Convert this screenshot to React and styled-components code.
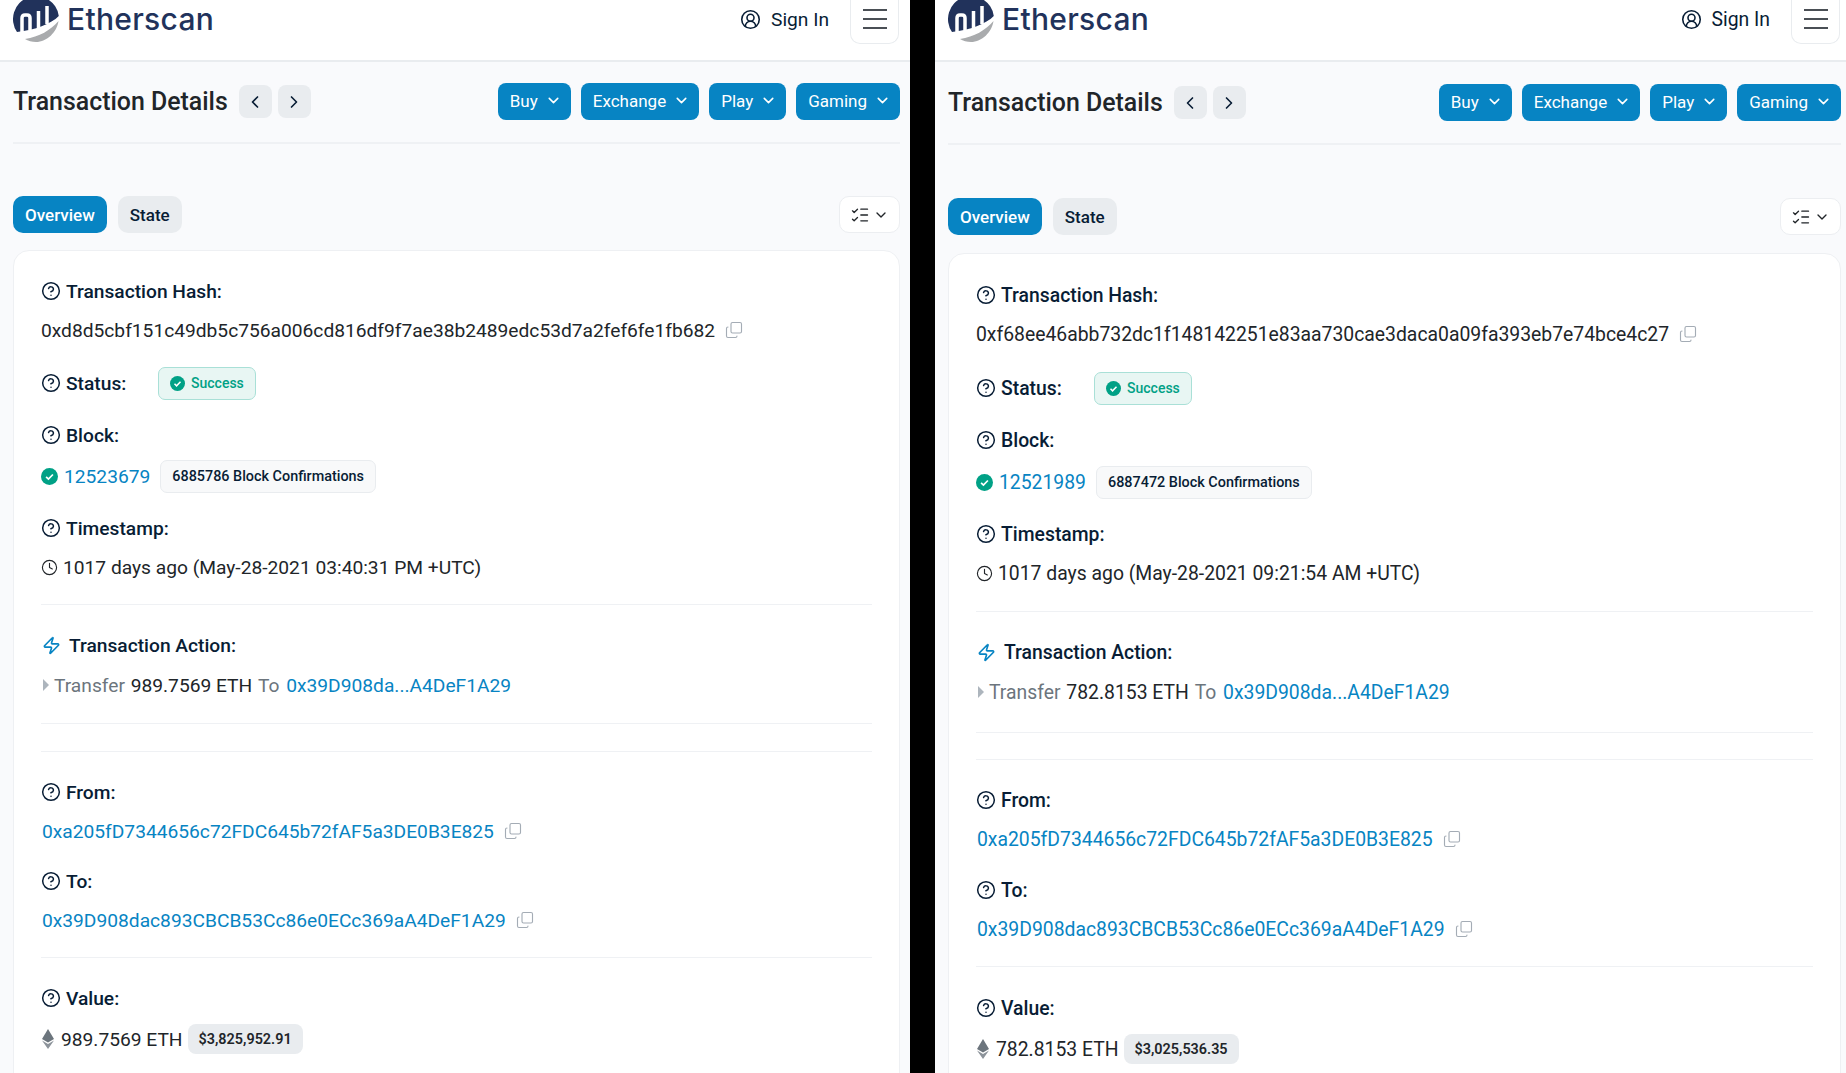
import styled, { createGlobalStyle } from "styled-components";
import {
  ChevronDown,
  ChevronLeft,
  ChevronRight,
  CircleHelp,
  CircleUserRound,
  Clock,
  Copy,
  ListChecks,
  Zap,
} from "lucide-react";

const LEFT = {
  hash: "0xd8d5cbf151c49db5c756a006cd816df9f7ae38b2489edc53d7a2fef6fe1fb682",
  block: "12523679",
  confirmations: "6885786 Block Confirmations",
  time: "1017 days ago (May-28-2021 03:40:31 PM +UTC)",
  amount: "989.7569 ETH",
  price: "$3,825,952.91",
  width: 910,
  font: 19.2,
  padLeft: 13,
  padRight: 10,
  toolbarTop: 21,
  ruleTop: 22,
  tabsTop: 52,
  cardTop: 17,
  cardPad: 28,
  statusWidth: 117,
  gaps: [15, 29, 28, 17, 28, 15, 25, 28, 16, 26, 27, 28, 15, 26, 15, 25, 28, 17],
};

const RIGHT = {
  hash: "0xf68ee46abb732dc1f148142251e83aa730cae3daca0a09fa393eb7e74bce4c27",
  block: "12521989",
  confirmations: "6887472 Block Confirmations",
  time: "1017 days ago (May-28-2021 09:21:54 AM +UTC)",
  amount: "782.8153 ETH",
  price: "$3,025,536.35",
  width: 911,
  font: 19.35,
  padLeft: 13,
  padRight: 5,
  toolbarTop: 22,
  ruleTop: 22,
  tabsTop: 53,
  cardTop: 18,
  cardPad: 29,
  statusWidth: 118,
  gaps: [15, 30, 28, 18, 28, 15, 26, 28, 16, 28, 26, 28, 15, 27, 15, 25, 29, 17],
};

const MENUS = ["Buy", "Exchange", "Play", "Gaming"];
const FROM = "0xa205fD7344656c72FDC645b72fAF5a3DE0B3E825";
const TO = "0x39D908dac893CBCB53Cc86e0ECc369aA4DeF1A29";

const GlobalStyle = createGlobalStyle`
  html, body {
    margin: 0;
    background: #000;
  }
  * {
    box-sizing: border-box;
  }
`;

const Page = styled.div`
  display: flex;
  width: 1846px;
  height: 1073px;
  justify-content: space-between;
  overflow: hidden;
  background: #000;
  font-family: Roboto, "Liberation Sans", sans-serif;
  color: #212529;
`;

const PanelBox = styled.div`
  width: ${(p) => p.$width}px;
  height: 1073px;
  overflow: hidden;
  background: #f9fafc;
  font-size: ${(p) => p.$font}px;
`;

const Header = styled.header`
  display: flex;
  align-items: flex-start;
  height: 62px;
  padding: 0 ${(p) => p.$right}px 0 ${(p) => p.$left}px;
  background: #fff;
  border-bottom: 2px solid #e9ecef;
`;

const LogoMark = styled.svg`
  flex: none;
  width: 46px;
  height: 46px;
  margin-top: -4px;
`;

const LogoText = styled.span`
  margin: 0 auto 0 8px;
  font-family: Inter, sans-serif;
  font-size: 30px;
  font-weight: 500;
  letter-spacing: 0.3px;
  line-height: 39px;
  color: #21325b;
`;

const SignIn = styled.span`
  display: flex;
  align-items: center;
  gap: 10px;
  height: 39px;
  margin-right: 21px;
  color: #081d35;
`;

const MenuBox = styled.div`
  display: flex;
  flex-direction: column;
  align-items: center;
  justify-content: flex-end;
  gap: 7px;
  width: 49px;
  height: 44px;
  padding-bottom: 14px;
  background: #fff;
  border: 1px solid #e9ecef;
  border-top: 0;
  border-radius: 0 0 10px 10px;
`;

const MenuLine = styled.i`
  display: block;
  width: 24px;
  height: 2px;
  background: #4a4f55;
`;

const Content = styled.div`
  padding: 0 ${(p) => p.$right}px 0 ${(p) => p.$left}px;
`;

const TitleRow = styled.div`
  display: flex;
  align-items: center;
  margin-top: ${(p) => p.$top}px;
  height: 37px;
`;

const Title = styled.h1`
  margin: 0 11px 0 0;
  font-size: 24.9px;
  font-weight: 500;
  color: #212529;
`;

const ArrowButton = styled.span`
  display: flex;
  align-items: center;
  justify-content: center;
  width: 33px;
  height: 33px;
  margin-right: 6px;
  border-radius: 8px;
  background: #e9ecef;
  color: #081d35;
`;

const DropMenus = styled.div`
  display: flex;
  gap: 10px;
  margin-left: auto;
`;

const DropButton = styled.span`
  display: flex;
  align-items: center;
  justify-content: space-between;
  gap: 7px;
  height: 37px;
  padding: 0 9px 2px 12px;
  border-radius: 8px;
  background: #0784c3;
  color: #fff;
  font-size: 17px;
`;

const Rule = styled.hr`
  margin: ${(p) => p.$top}px 0 0;
  height: 2px;
  border: 0;
  background: #eff1f4;
`;

const TabRow = styled.div`
  display: flex;
  align-items: center;
  gap: 11px;
  margin-top: ${(p) => p.$top}px;
  height: 37px;
`;

const Tab = styled.span`
  display: flex;
  align-items: center;
  height: 37px;
  padding: 0 12px;
  border-radius: 10px;
  font-size: 17px;
  font-weight: 500;
  background: ${(p) => (p.$active ? "#0784c3" : "#e9ecef")};
  color: ${(p) => (p.$active ? "#fff" : "#081d35")};
`;

const ViewButton = styled.span`
  display: flex;
  align-items: center;
  justify-content: center;
  gap: 3px;
  width: 61px;
  height: 37px;
  margin-left: auto;
  border: 1px solid #eceef1;
  border-radius: 10px;
  background: #fff;
  color: #212529;
`;

const Card = styled.section`
  margin-top: ${(p) => p.$top}px;
  padding: ${(p) => p.$pad}px 27px 0;
  min-height: 900px;
  background: #fff;
  border: 1px solid #eef0f3;
  border-radius: 16px;
`;

const Line = styled.div`
  display: flex;
  align-items: center;
  height: 24px;
  margin-top: ${(p) => p.$gap || 0}px;
  white-space: nowrap;
`;

const Divider = styled.hr`
  margin: ${(p) => p.$gap}px 0 0;
  height: 1px;
  border: 0;
  background: #eff1f4;
`;

const Label = styled.span`
  display: flex;
  align-items: center;
  gap: 5px;
  min-width: ${(p) => p.$width || 0}px;
  font-weight: 500;
  color: #081d35;
`;

const Link = styled.a`
  color: #0784c3;
  text-decoration: none;
`;

const Address = styled(Link)`
  margin-left: 1px;
`;

const CopyMark = styled(Copy)`
  flex: none;
  margin-left: 10px;
  color: #a4acb5;
  transform: scaleY(-1);
`;

const StatusBadge = styled.span`
  display: flex;
  align-items: center;
  gap: 6px;
  height: 33px;
  padding: 0 11px;
  border: 1px solid #a9e0d7;
  border-radius: 7px;
  background: #e8f6f3;
  color: #00a186;
  font-size: 14px;
  font-weight: 500;
`;

const Check = styled.svg`
  flex: none;
  width: ${(p) => p.$size}px;
  height: ${(p) => p.$size}px;
`;

const BlockLink = styled(Link)`
  margin-left: 6px;
`;

const ConfirmBadge = styled.span`
  display: flex;
  align-items: center;
  height: 33px;
  margin-left: 10px;
  padding: 0 11px;
  border: 1px solid #e9ecef;
  border-radius: 7px;
  background: #f8f9fa;
  color: #081d35;
  font-size: 14.4px;
  font-weight: 500;
`;

const TimeText = styled.span`
  margin-left: 5px;
`;

const ActionLabel = styled(Label)`
  gap: 8px;
  margin-left: 1px;
`;

const Caret = styled.i`
  width: 0;
  height: 0;
  margin: 0 5px 0 2px;
  border-left: 6px solid #adb5bd;
  border-top: 6px solid transparent;
  border-bottom: 6px solid transparent;
`;

const Muted = styled.span`
  margin-right: 1px;
  color: #6c757d;
  white-space: pre;
`;

const Plain = styled.span`
  margin-right: 1px;
  white-space: pre;
`;

const ToWord = styled(Muted)`
  margin-right: 2px;
`;

const EthMark = styled.svg`
  flex: none;
  width: 14px;
  height: 20px;
  margin-right: 6px;
`;

const PriceBadge = styled.span`
  display: flex;
  align-items: center;
  height: 30px;
  margin-left: 5px;
  padding: 0 11px;
  border-radius: 8px;
  background: #e9ecef;
  color: #212529;
  font-size: 14.4px;
  font-weight: 600;
`;

const Logo = () => (
  <LogoMark viewBox="0 0 46 46">
    <path fill="#21325b" d="M4 36A23 23 0 1 1 45.800 20C38 28 22 34 4 36z" />
    <path fill="#a9abad" d="M12 43C26 41 38 34 45.500 25C44 36 34 46 23 46C19 46 15 45 12 43z" />
    <path
      fill="none"
      stroke="#fff"
      strokeWidth="3.500"
      d="M9 36V22Q9 19 12 19H14Q17 19 17 22V34M25.500 32V15M34 28V10"
    />
  </LogoMark>
);

const SuccessIcon = ({ size }) => (
  <Check $size={size} viewBox="0 0 16 16">
    <circle cx="8" cy="8" r="8" fill="#00a186" />
    <path d="M4.800 8.300l2.200 2.200 4.200-4.400" fill="none" stroke="#fff" strokeWidth="1.600" />
  </Check>
);

const Help = () => <CircleHelp size={20} strokeWidth={1.8} />;

const Panel = ({ data }) => {
  const g = data.gaps;
  return (
    <PanelBox $width={data.width} $font={data.font}>
      <Header $left={data.padLeft} $right={data.padRight + 1}>
        <Logo />
        <LogoText>Etherscan</LogoText>
        <SignIn>
          <CircleUserRound size={21} strokeWidth={1.8} />
          Sign In
        </SignIn>
        <MenuBox>
          <MenuLine />
          <MenuLine />
          <MenuLine />
        </MenuBox>
      </Header>
      <Content $left={data.padLeft} $right={data.padRight}>
        <TitleRow $top={data.toolbarTop}>
          <Title>Transaction Details</Title>
          <ArrowButton>
            <ChevronLeft size={20} strokeWidth={2} />
          </ArrowButton>
          <ArrowButton>
            <ChevronRight size={20} strokeWidth={2} />
          </ArrowButton>
          <DropMenus>
            {MENUS.map((m) => (
              <DropButton key={m}>
                {m}
                <ChevronDown size={17} strokeWidth={2.2} />
              </DropButton>
            ))}
          </DropMenus>
        </TitleRow>
        <Rule $top={data.ruleTop} />
        <TabRow $top={data.tabsTop}>
          <Tab $active>Overview</Tab>
          <Tab>State</Tab>
          <ViewButton>
            <ListChecks size={20} strokeWidth={1.6} />
            <ChevronDown size={16} strokeWidth={2} />
          </ViewButton>
        </TabRow>
        <Card $top={data.cardTop} $pad={data.cardPad}>
          <Line>
            <Label>
              <Help />
              Transaction Hash:
            </Label>
          </Line>
          <Line $gap={g[0]}>
            {data.hash}
            <CopyMark size={18} strokeWidth={1.5} />
          </Line>
          <Line $gap={g[1]}>
            <Label $width={data.statusWidth}>
              <Help />
              Status:
            </Label>
            <StatusBadge>
              <SuccessIcon size={15} />
              Success
            </StatusBadge>
          </Line>
          <Line $gap={g[2]}>
            <Label>
              <Help />
              Block:
            </Label>
          </Line>
          <Line $gap={g[3]}>
            <SuccessIcon size={17} />
            <BlockLink>{data.block}</BlockLink>
            <ConfirmBadge>{data.confirmations}</ConfirmBadge>
          </Line>
          <Line $gap={g[4]}>
            <Label>
              <Help />
              Timestamp:
            </Label>
          </Line>
          <Line $gap={g[5]}>
            <Clock size={17} strokeWidth={1.6} />
            <TimeText>{data.time}</TimeText>
          </Line>
          <Divider $gap={g[6]} />
          <Line $gap={g[7]}>
            <ActionLabel>
              <Zap size={19} strokeWidth={2.1} color="#0784c3" />
              Transaction Action:
            </ActionLabel>
          </Line>
          <Line $gap={g[8]}>
            <Caret />
            <Muted>Transfer </Muted>
            <Plain>{data.amount} </Plain>
            <ToWord>To </ToWord>
            <Link>0x39D908da...A4DeF1A29</Link>
          </Line>
          <Divider $gap={g[9]} />
          <Divider $gap={g[10]} />
          <Line $gap={g[11]}>
            <Label>
              <Help />
              From:
            </Label>
          </Line>
          <Line $gap={g[12]}>
            <Address>{FROM}</Address>
            <CopyMark size={18} strokeWidth={1.5} />
          </Line>
          <Line $gap={g[13]}>
            <Label>
              <Help />
              To:
            </Label>
          </Line>
          <Line $gap={g[14]}>
            <Address>{TO}</Address>
            <CopyMark size={18} strokeWidth={1.5} />
          </Line>
          <Divider $gap={g[15]} />
          <Line $gap={g[16]}>
            <Label>
              <Help />
              Value:
            </Label>
          </Line>
          <Line $gap={g[17]}>
            <EthMark viewBox="0 0 14 20">
              <path fill="#6c757d" d="M7 0l6 10-6 3.500L1 10z" />
              <path fill="#8c939a" d="M1 11.500l6 3.500 6-3.500L7 20z" />
            </EthMark>
            {data.amount}
            <PriceBadge>{data.price}</PriceBadge>
          </Line>
        </Card>
      </Content>
    </PanelBox>
  );
};

const App = () => (
  <Page>
    <GlobalStyle />
    <Panel data={LEFT} />
    <Panel data={RIGHT} />
  </Page>
);

export default App;
